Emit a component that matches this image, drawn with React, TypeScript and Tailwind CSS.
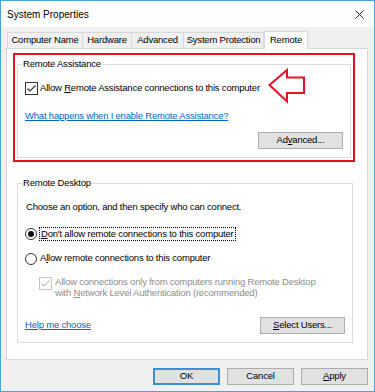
import React from "react";

const font = { fontFamily: '"Liberation Sans", Arial, sans-serif' };

function Tab({ label, width, selected, first }: { label: string; width: string; selected?: boolean; first?: boolean }) {
  if (selected) {
    return (
      <div
        className={`relative z-10 -mb-px flex h-[18px] items-center justify-center border border-b-0 border-[#d9d9d9] bg-white ${width}`}
      >
        {label}
      </div>
    );
  }
  return (
    <div
      className={`flex h-[16px] items-center justify-center border-t border-r border-[#d9d9d9] bg-[#f0f0f0] ${first ? "border-l" : ""} ${width}`}
    >
      {label}
    </div>
  );
}

function Button({ children, primary, width = "w-[85px]" }: { children: React.ReactNode; primary?: boolean; width?: string }) {
  return (
    <div
      className={`flex h-[17px] items-center justify-center bg-[#e1e1e1] ${width} ${
        primary ? "border-2 border-[#3d8ed8]" : "border border-[#adadad]"
      }`}
    >
      {children}
    </div>
  );
}

function Checkbox({ disabled }: { disabled?: boolean }) {
  const stroke = disabled ? "#c4c4c4" : "#333333";
  return (
    <svg width="13" height="13" viewBox="0 0 13 13" className="shrink-0">
      <rect x="0.5" y="0.5" width="12" height="12" fill="white" stroke={stroke} />
      <path d="M2.5 6.5 L5 9 L10.5 3.5" fill="none" stroke={stroke} strokeWidth="1.2" />
    </svg>
  );
}

function Radio({ checked }: { checked?: boolean }) {
  return (
    <svg width="12" height="12" viewBox="0 0 12 12" className="shrink-0">
      <circle cx="6" cy="6" r="5.5" fill="white" stroke="#333333" />
      {checked && <circle cx="6" cy="6" r="3" fill="#111111" />}
    </svg>
  );
}

function GroupBox({ title, className, children }: { title: string; className: string; children: React.ReactNode }) {
  return (
    <div className={`relative border border-[#dcdcdc] ${className}`}>
      <span className="absolute left-[4px] top-[-7px] bg-white px-px leading-[12px]">{title}</span>
      {children}
    </div>
  );
}

export default function App() {
  return (
    <div
      style={font}
      className="flex h-[392px] w-[375px] flex-col border border-[#4aa3df] bg-[#f0f0f0] text-[9.5px] tracking-[-0.2px] text-black"
    >
      {/* title bar */}
      <div className="flex h-[26px] items-center justify-between bg-white pl-[6px] pr-[10px]">
        <span className="text-[10px] tracking-normal">System Properties</span>
        <svg width="9" height="9" viewBox="0 0 9 9">
          <path d="M0.5 0.5 L8.5 8.5 M8.5 0.5 L0.5 8.5" stroke="#222" strokeWidth="1" />
        </svg>
      </div>

      {/* tabs */}
      <div className="ml-[6px] mt-[4px] flex h-[17px] items-end">
        <Tab label="Computer Name" width="w-[76px]" first />
        <Tab label="Hardware" width="w-[49px]" />
        <Tab label="Advanced" width="w-[52px]" />
        <Tab label="System Protection" width="w-[80px]" />
        <Tab label="Remote" width="w-[44px]" selected />
      </div>

      {/* tab panel */}
      <div className="ml-[5px] h-[312px] w-[362px] border border-[#d9d9d9] bg-white">
        <div className="relative ml-[6px] mt-[4px] w-[342px] border-2 border-[#e81123] pb-[2px]">
          <GroupBox title="Remote Assistance" className="ml-[2px] mt-[9px] w-[334px]">
            <div className="flex h-[13px] items-center gap-[2px] pl-[7px] mt-[17px]">
              <Checkbox />
              <span>
                Allow <span className="underline">R</span>emote Assistance connections to this computer
              </span>
            </div>
            <div className="mt-[15px] pl-[7px] leading-[12px]">
              <span className="text-[#0066cc] underline">What happens when I enable Remote Assistance?</span>
            </div>
            <div className="mt-[10px] mb-[8px] flex justify-end pr-[7px]">
              <Button>
                Ad<span className="underline">v</span>anced...
              </Button>
            </div>
          </GroupBox>

          {/* annotation arrow */}
          <svg width="38" height="36" viewBox="0 0 38 36" className="absolute left-[253px] top-[13px]">
            <path d="M1.5 17 L19 2 L19 9.5 L36 9.5 L36 25 L19 25 L19 33.5 Z" fill="white" stroke="#e81123" strokeWidth="2" strokeLinejoin="miter" />
          </svg>
        </div>

        <GroupBox title="Remote Desktop" className="ml-[10px] mt-[21px] w-[336px]">
          <div className="mt-[17px] pl-[8px] leading-[12px]">Choose an option, and then specify who can connect.</div>
          <div className="mt-[14px] flex h-[13px] items-center gap-[2px] pl-[7px]">
            <Radio checked />
            <span className="border border-dotted border-black px-px leading-[12px]">
              <span className="underline">D</span>on't allow remote connections to this computer
            </span>
          </div>
          <div className="mt-[12px] flex h-[13px] items-center gap-[3px] pl-[7px]">
            <Radio />
            <span>
              A<span className="underline">l</span>low remote connections to this computer
            </span>
          </div>
          <div className="mt-[11px] flex gap-[3px] pl-[21px] text-[#8d8d8d]">
            <div className="pt-px">
              <Checkbox disabled />
            </div>
            <div className="leading-[11px]">
              <div>Allow connections only from computers running Remote Desktop</div>
              <div>
                with <span className="underline">N</span>etwork Level Authentication (recommended)
              </div>
            </div>
          </div>
          <div className="mt-[19px] mb-[8px] flex h-[17px] items-center justify-between pl-[7px] pr-[7px]">
            <span className="text-[#0066cc] underline">Help me choose</span>
            <Button>
              <span className="underline">S</span>elect Users...
            </Button>
          </div>
        </GroupBox>
      </div>

      {/* dialog buttons */}
      <div className="mt-[8px] flex justify-end gap-[7px] pr-[6px]">
        <Button primary width="w-[67px]">
          OK
        </Button>
        <Button width="w-[67px]">Cancel</Button>
        <Button width="w-[67px]">
          <span className="underline">A</span>pply
        </Button>
      </div>
    </div>
  );
}
